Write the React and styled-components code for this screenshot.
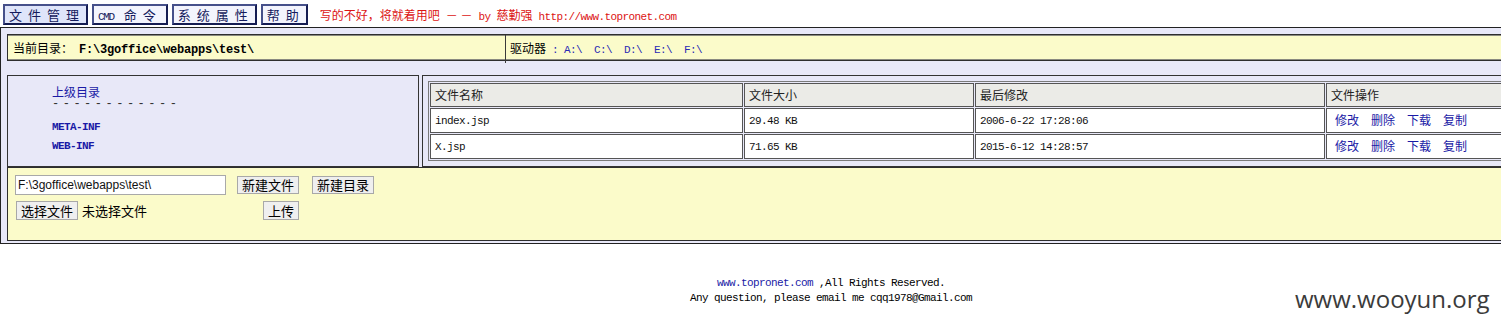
import React from 'react';
import styled, { createGlobalStyle } from 'styled-components';

const LAV = '#e8e8f8';
const YEL = '#fbfbca';
const LINK = '#1a1aa6';

const Global = createGlobalStyle`
  html, body { margin: 0; padding: 0; background: #fff; overflow: hidden; }
  body {
    font-family: "Liberation Sans", "Noto Sans CJK SC", sans-serif;
    font-size: 12px;
    color: #000;
  }
`;

const Page = styled.div`
  position: relative;
  width: 1662px;
  height: 331px;
`;

const Latin = styled.span`
  font-family: "Liberation Mono", "Noto Sans CJK SC", monospace;
  font-size: ${p => (p.$size ? p.$size : 11)}px;
  letter-spacing: ${p => (p.$bold ? '-0.2px' : '-0.6px')};
  font-weight: ${p => (p.$bold ? 700 : 400)};
  white-space: pre;
`;

const MenuBar = styled.div`
  display: flex;
  align-items: flex-start;
  gap: 4px;
  height: 27px;
  padding: 4px 0 0 3px;
  box-sizing: border-box;
`;

const MenuButton = styled.div`
  box-sizing: border-box;
  height: 21px;
  padding: 0 ${p => p.$padR || 1}px 0 4px;
  border: 2px solid;
  border-color: #46508a #151c52 #151c52 #46508a;
  background: ${p => (p.$active ? '#dfe5fa' : '#f3f4fd')};
  color: #151b5c;
  font-family: "Noto Sans CJK SC", sans-serif;
  font-size: 13px;
  letter-spacing: 6px;
  line-height: 17px;
  white-space: pre;
`;

const CmdLabel = styled.span`
  font-family: "Liberation Mono", monospace;
  font-size: 11px;
  letter-spacing: -1.4px;
  margin-right: 10px;
  vertical-align: baseline;
`;

const Slogan = styled.div`
  margin-left: 8px;
  color: #dc1414;
  font-size: 12px;
  line-height: 21px;
  font-family: "Noto Sans CJK SC", sans-serif;
  white-space: pre;
`;

const Panel = styled.div`
  border: 1px solid #222;
  border-right: none;
  background: ${LAV};
  padding: 6px 0 2px 6px;
`;

const PathBar = styled.div`
  display: grid;
  grid-template-columns: 498px 1fr;
  height: 27px;
  box-sizing: border-box;
  border: 1px solid #2e2e2e;
  border-right: none;
  background: ${YEL};
  box-shadow: inset 0 1px 0 #8a8a80, inset 0 -1px 0 #8a8a80;
`;

const PathCell = styled.div`
  border-right: 1px solid #3a3a3a;
  padding-left: 5px;
  line-height: 25px;
  white-space: pre;
  font-family: "Noto Sans CJK SC", sans-serif;
  font-size: 12px;
`;

const DriveCell = styled.div`
  padding-left: 4px;
  line-height: 25px;
  white-space: pre;
  font-family: "Noto Sans CJK SC", sans-serif;
  font-size: 12px;
`;

const DriveSep = styled.span`
  color: #2a2ab4;
  font-family: "Liberation Mono", monospace;
  font-size: 11px;
  letter-spacing: -0.6px;
`;

const DriveLink = styled.a`
  color: #2a2ab4;
  text-decoration: none;
  margin-right: 12px;
  font-family: "Liberation Mono", monospace;
  font-size: 11px;
  letter-spacing: -0.6px;
`;

const BrowserRow = styled.div`
  display: grid;
  grid-template-columns: 412px 1fr;
  column-gap: 3px;
  margin-top: 14px;
`;

const TreeCell = styled.div`
  border: 1px solid #333;
  background: ${LAV};
  padding: 8px 0 0 44px;
  display: flex;
  flex-direction: column;
`;

const ParentLink = styled.a`
  color: ${LINK};
  text-decoration: none;
  font-family: "Noto Sans CJK SC", sans-serif;
  font-size: 12px;
  line-height: 16px;
`;

const Dashes = styled.div`
  font-family: "Liberation Mono", monospace;
  font-size: 12px;
  letter-spacing: -1.85px;
  line-height: 8px;
  color: #333;
  white-space: pre;
`;

const DirLink = styled.a`
  color: ${LINK};
  text-decoration: none;
  font-family: "Liberation Mono", monospace;
  font-weight: 700;
  font-size: 11px;
  letter-spacing: -0.6px;
  line-height: 16px;
  margin-top: ${p => p.$gap}px;
`;

const ListCell = styled.div`
  border: 1px solid #333;
  background: ${LAV};
  padding: 5px;
`;

const FileTable = styled.table`
  width: 100%;
  table-layout: fixed;
  border-collapse: separate;
  border-spacing: 1px;
  border: 1px solid #7a7a7a;
`;

const HeadCell = styled.th`
  background: #ebebe7;
  border: 1px solid #555;
  text-align: left;
  font-weight: 400;
  padding: 0 4px;
  line-height: 22px;
  font-family: "Noto Sans CJK SC", sans-serif;
  font-size: 12px;
  color: #222;
`;

const Cell = styled.td`
  background: #fff;
  border: 1px solid #555;
  padding: 0 4px;
  line-height: 22px;
  white-space: pre;
  color: #111;
`;

const OpLink = styled.a`
  color: ${LINK};
  text-decoration: none;
  font-family: "Noto Sans CJK SC", sans-serif;
  font-size: 12px;
  margin-left: ${p => (p.$first ? 4 : 12)}px;
`;

const Tools = styled.div`
  border: 1px solid #2e2e2e;
  border-right: none;
  background: ${YEL};
  padding: 7px 7px 20px;
  display: flex;
  flex-direction: column;
  gap: 6px;
`;

const ToolRow = styled.div`
  display: flex;
  align-items: center;
  height: ${p => p.$h}px;
`;

const PathInput = styled.input`
  box-sizing: border-box;
  width: 211px;
  height: 20px;
  border: 1px solid #a9a9a9;
  padding: 0 2px;
  font-family: "Liberation Sans", sans-serif;
  font-size: 12px;
  color: #111;
  background: #fff;
  outline: none;
`;

const Btn = styled.button`
  box-sizing: border-box;
  height: ${p => p.$h || 18}px;
  padding: 0 4px;
  margin-left: ${p => p.$ml || 0}px;
  border: 1px solid #a8a8a8;
  border-radius: 0;
  background: #efefef;
  font-family: "Noto Sans CJK SC", sans-serif;
  font-size: 13px;
  line-height: 16px;
  color: #000;
`;

const FilePicker = styled.div`
  display: flex;
  align-items: center;
  width: 248px;
  padding-left: 1px;
  box-sizing: border-box;
`;

const NoFile = styled.span`
  margin-left: 4px;
  font-family: "Noto Sans CJK SC", sans-serif;
  font-size: 13px;
  line-height: 18px;
`;

const Footer = styled.div`
  margin-top: 31px;
  text-align: center;
  line-height: 14px;
`;

const FooterLink = styled.a`
  color: ${LINK};
  text-decoration: none;
`;

const Watermark = styled.div`
  position: absolute;
  left: 1295px;
  top: 287px;
  font-family: "Open Sans", sans-serif;
  font-size: 24px;
  line-height: 24px;
  color: #3b3b3b;
`;

const files = [
  { name: 'index.jsp', size: '29.48 KB', date: '2006-6-22 17:28:06' },
  { name: 'X.jsp', size: '71.65 KB', date: '2015-6-12 14:28:57' },
];

const drives = ['A:\\', 'C:\\', 'D:\\', 'E:\\', 'F:\\'];

export default function App() {
  return (
    <Page>
      <Global />
      <MenuBar>
        <MenuButton $active>文件管理</MenuButton>
        <MenuButton $padR={4}>
          <CmdLabel>CMD</CmdLabel>命令
        </MenuButton>
        <MenuButton>系统属性</MenuButton>
        <MenuButton>帮助</MenuButton>
        <Slogan>
          写的不好，将就着用吧<Latin> </Latin>－ －<Latin> by </Latin>慈勤强
          <Latin> http://www.topronet.com</Latin>
        </Slogan>
      </MenuBar>

      <Panel>
        <PathBar>
          <PathCell>
            当前目录：<Latin> </Latin>
            <Latin $bold $size={12}>F:\3goffice\webapps\test\</Latin>
          </PathCell>
          <DriveCell>
            驱动器<DriveSep> : </DriveSep>
            {drives.map(d => (
              <DriveLink key={d} href="#">{d}</DriveLink>
            ))}
          </DriveCell>
        </PathBar>

        <BrowserRow>
          <TreeCell>
            <ParentLink href="#">上级目录</ParentLink>
            <Dashes>{'- - - - - - - - - - - -'}</Dashes>
            <DirLink href="#" $gap={11}>META-INF</DirLink>
            <DirLink href="#" $gap={3}>WEB-INF</DirLink>
          </TreeCell>
          <ListCell>
            <FileTable>
              <colgroup>
                <col style={{ width: 313 }} />
                <col style={{ width: 230 }} />
                <col style={{ width: 350 }} />
                <col />
              </colgroup>
              <thead>
                <tr>
                  <HeadCell>文件名称</HeadCell>
                  <HeadCell>文件大小</HeadCell>
                  <HeadCell>最后修改</HeadCell>
                  <HeadCell>文件操作</HeadCell>
                </tr>
              </thead>
              <tbody>
                {files.map(f => (
                  <tr key={f.name}>
                    <Cell><Latin>{f.name}</Latin></Cell>
                    <Cell><Latin>{f.size}</Latin></Cell>
                    <Cell><Latin>{f.date}</Latin></Cell>
                    <Cell>
                      <OpLink href="#" $first>修改</OpLink>
                      <OpLink href="#">删除</OpLink>
                      <OpLink href="#">下载</OpLink>
                      <OpLink href="#">复制</OpLink>
                    </Cell>
                  </tr>
                ))}
              </tbody>
            </FileTable>
          </ListCell>
        </BrowserRow>

        <Tools>
          <ToolRow $h={20}>
            <PathInput defaultValue="F:\3goffice\webapps\test\" />
            <Btn $ml={11}>新建文件</Btn>
            <Btn $ml={13}>新建目录</Btn>
          </ToolRow>
          <ToolRow $h={19}>
            <FilePicker>
              <Btn $h={19}>选择文件</Btn>
              <NoFile>未选择文件</NoFile>
            </FilePicker>
            <Btn $h={19}>上传</Btn>
          </ToolRow>
        </Tools>
      </Panel>

      <Footer>
        <Latin>
          <FooterLink href="#">www.topronet.com</FooterLink> ,All Rights Reserved.
        </Latin>
        <br />
        <Latin>Any question, please email me cqq1978@Gmail.com</Latin>
      </Footer>

      <Watermark>www.wooyun.org</Watermark>
    </Page>
  );
}
